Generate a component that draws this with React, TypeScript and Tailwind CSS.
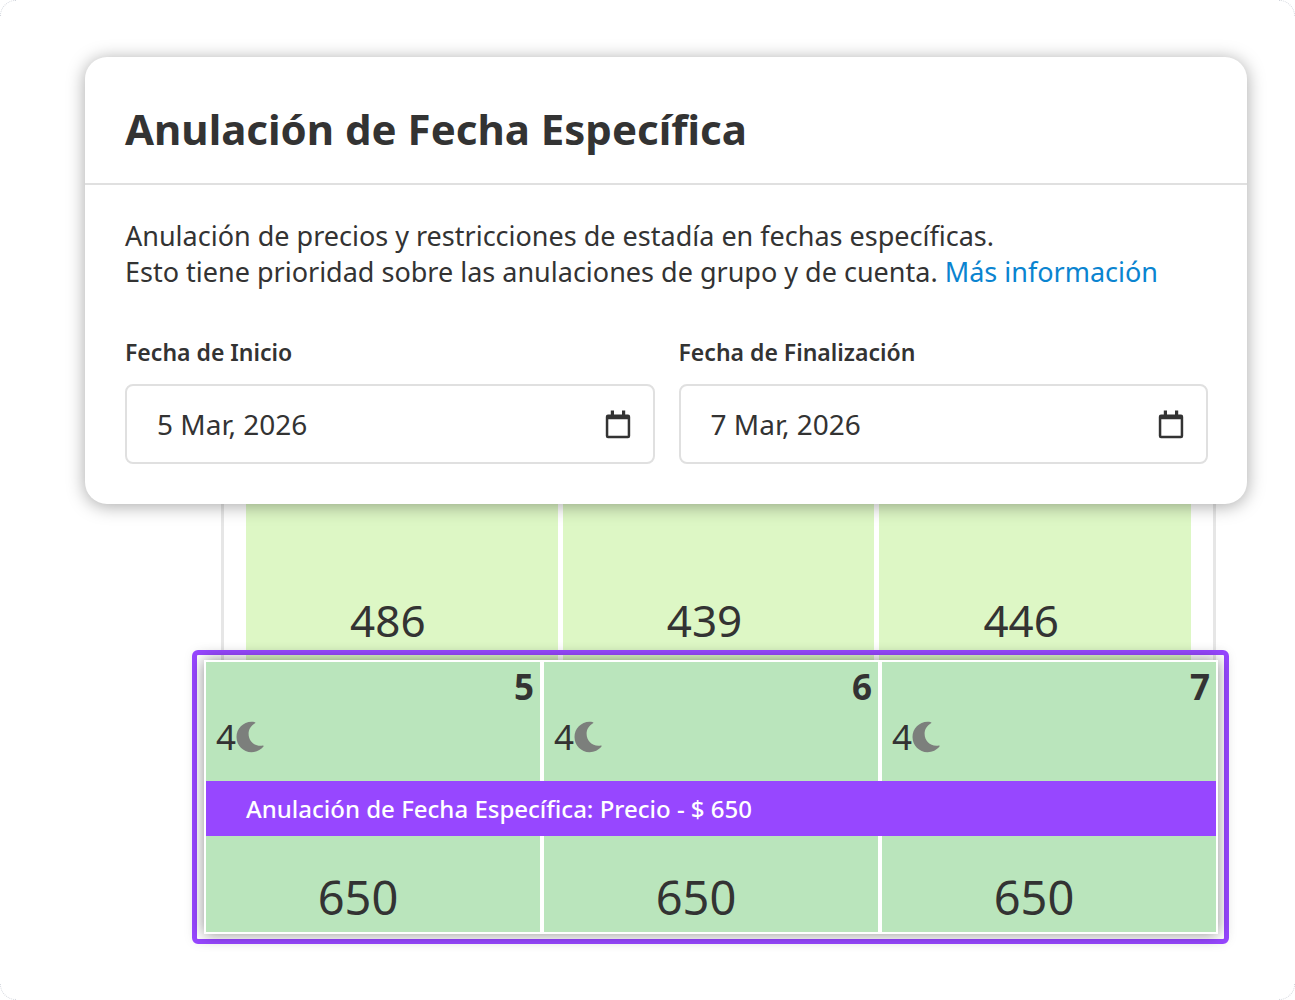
import { useState } from 'react'

interface Day {
  day: number
  minNights: number
  basePrice: number
  overridePrice: number
}

const DAYS: Day[] = [
  { day: 5, minNights: 4, basePrice: 486, overridePrice: 650 },
  { day: 6, minNights: 4, basePrice: 439, overridePrice: 650 },
  { day: 7, minNights: 4, basePrice: 446, overridePrice: 650 },
]

function CalendarIcon() {
  return (
    <svg viewBox="0 0 26 30" className="h-[30px] w-[26px]" aria-hidden="true">
      <path
        fillRule="evenodd"
        fill="#333333"
        d="M5.8 1.500h3.200v4h8V1.500h3.200v4H23a2.200 2.200 0 0 1 2.200 2.200v19.300A2.200 2.200 0 0 1 23 29.200H3a2.200 2.200 0 0 1-2.200-2.200V7.700A2.200 2.200 0 0 1 3 5.500h2.800zM3.300 10.300v16.400h19.400V10.300z"
      />
    </svg>
  )
}

function MoonIcon() {
  return (
    <svg viewBox="0 0 28 32" className="h-8 w-7" aria-hidden="true">
      <path
        fill="#7c7f7c"
        d="M19 1.300C17.500.8 16.800.7 15.500.7 7.200.7.500 7.600.500 16S7.200 31.200 15.500 31.200c4.800 0 9.200-2.200 12-5.700.3-.6 0-1-.6-.9C19 26.100 12.600 20.400 12.600 12.800c0-4.400 2.500-8.300 6.400-10.500.5-.3.500-.8 0-1z"
      />
    </svg>
  )
}

function DateField({ id, label, initial }: Readonly<{ id: string; label: string; initial: string }>) {
  const [value, setValue] = useState(initial)

  return (
    <div className="min-w-0 flex-1">
      <label htmlFor={id} className="block text-[23px] leading-8 font-semibold">
        {label}
      </label>
      <div className="mt-4 flex h-20 items-center rounded-lg border-2 border-[#e0e0e0] pr-[22px]">
        <input
          id={id}
          type="text"
          value={value}
          onChange={(e) => setValue(e.target.value)}
          className="h-full min-w-0 flex-1 bg-transparent pb-px pl-[30px] text-[28px] outline-none"
        />
        <button type="button" aria-label={label}>
          <CalendarIcon />
        </button>
      </div>
    </div>
  )
}

function OverrideCard() {
  return (
    <section className="rounded-[22px] bg-white shadow-[0_2px_18px_rgba(0,0,0,0.35)]">
      <header className="border-b-2 border-[#e0e0e0] px-10 pt-10 pb-[22px]">
        <h1 className="text-[42px] leading-[64px] font-bold">Anulación de Fecha Específica</h1>
      </header>
      <div className="pt-[33px] pr-[39px] pb-10 pl-10">
        <p className="text-[27px] leading-9">
          Anulación de precios y restricciones de estadía en fechas específicas.
          <br />
          Esto tiene prioridad sobre las anulaciones de grupo y de cuenta.{' '}
          <a href="#" className="text-[#0a84d0]">
            Más información
          </a>
        </p>
        <div className="mt-[46px] flex gap-6">
          <DateField id="start" label="Fecha de Inicio" initial="5 Mar, 2026" />
          <DateField id="end" label="Fecha de Finalización" initial="7 Mar, 2026" />
        </div>
      </div>
    </section>
  )
}

function BasePrices() {
  return (
    <div className="mr-[79px] ml-[221px] grid grid-cols-3 gap-[5px] border-x-[3px] border-[#e6e6e6] px-[22px]">
      {DAYS.map((d) => (
        <div key={d.day} className="flex h-[156px] items-end justify-center bg-[#ddf7c5] pr-7 pb-2 text-[44px] leading-[64px]">
          {d.basePrice}
        </div>
      ))}
    </div>
  )
}

function OverrideRange() {
  return (
    <div className="relative -mt-[10px] mr-[66px] ml-[192px] rounded-md border-5 border-[#9747ff] py-[5px] pr-[6px] pl-[7px] shadow-[0_0_12px_rgba(0,0,0,0.05)]">
      <div className="bg-white p-[2px] shadow-[0_0_14px_rgba(0,0,0,0.45)]">
        <div className="grid grid-cols-3 gap-1">
          {DAYS.map((d) => (
            <div key={d.day} className="h-[119px] bg-[#bae5bc]">
              <p className="pr-[6px] text-right text-[35px] leading-[50px] font-bold">{d.day}</p>
              <p className="flex items-center pl-[10px] text-[35px] leading-[50px]">
                {d.minNights}
                <MoonIcon />
              </p>
            </div>
          ))}
        </div>
        <p className="bg-[#9747ff] px-10 text-2xl leading-[55px] font-medium text-white">
          Anulación de Fecha Específica: Precio - $ 650
        </p>
        <div className="grid grid-cols-3 gap-1">
          {DAYS.map((d) => (
            <div key={d.day} className="flex h-24 items-end justify-center bg-[#bae5bc] pr-[30px] text-[47px] leading-[70px]">
              {d.overridePrice}
            </div>
          ))}
        </div>
      </div>
    </div>
  )
}

export default function App() {
  return (
    <main className="relative min-h-screen bg-white pt-[57px] pb-14 font-['Noto_Sans','Open_Sans',sans-serif] text-[#333333]">
      <span className="absolute top-0 left-0 size-4 rounded-tl-2xl border-t border-l border-dotted border-gray-300" />
      <span className="absolute top-0 right-0 size-4 rounded-tr-2xl border-t border-r border-dotted border-gray-300" />
      <span className="absolute bottom-0 left-0 size-4 rounded-bl-2xl border-b border-l border-dotted border-gray-300" />
      <span className="absolute right-0 bottom-0 size-4 rounded-br-2xl border-r border-b border-dotted border-gray-300" />
      <div className="relative z-10 mr-12 ml-[85px]">
        <OverrideCard />
      </div>
      <BasePrices />
      <OverrideRange />
    </main>
  )
}
